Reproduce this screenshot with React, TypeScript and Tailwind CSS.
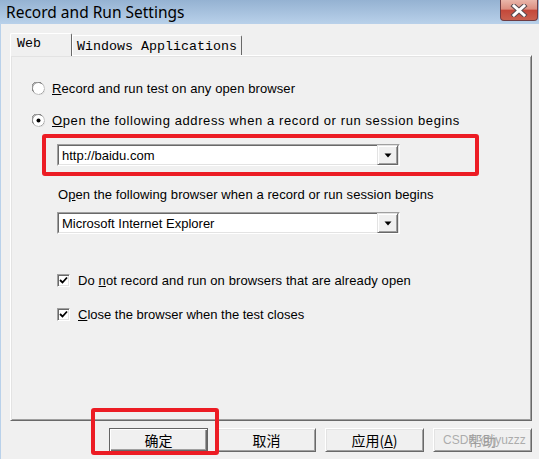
import React from "react";

const sans = { fontFamily: '"Liberation Sans", Arial, sans-serif' };
const mono = { fontFamily: '"Liberation Mono", "DejaVu Sans Mono", monospace' };
const cjk = { fontFamily: '"Noto Sans CJK SC", "Liberation Sans", sans-serif' };

function Radio({ checked }: { checked?: boolean }) {
  return (
    <svg width="13" height="13" viewBox="0 0 13 13" className="shrink-0">
      <circle cx="6.5" cy="6.5" r="6" fill="#fff" stroke="#a0a0a0" />
      <path d="M1.5 9.5 A5.5 5.5 0 0 1 9.5 1.5" fill="none" stroke="#696969" strokeWidth="1" />
      <path d="M11.5 3.5 A5.5 5.5 0 0 1 3.5 11.5" fill="none" stroke="#e3e3e3" strokeWidth="1" />
      {checked && <circle cx="6.5" cy="6.5" r="2" fill="#000" />}
    </svg>
  );
}

function Check() {
  return (
    <div className="w-[13px] h-[13px] shrink-0 bg-white border-t border-l border-[#a0a0a0] border-r border-b border-r-white border-b-white shadow-[inset_1px_1px_0_#696969,inset_-1px_-1px_0_#e3e3e3] flex items-center justify-center">
      <svg width="9" height="9" viewBox="0 0 9 9">
        <path d="M1 4 L3.5 6.5 L8 1.5" fill="none" stroke="#000" strokeWidth="1.8" />
      </svg>
    </div>
  );
}

function Combo({ value }: { value: string }) {
  return (
    <div className="w-[343px] h-[22px] border-t border-l border-[#a0a0a0] border-r-white border-b-white border-r border-b">
      <div className="w-full h-full bg-white border-t border-l border-[#696969] border-r border-b border-r-[#e3e3e3] border-b-[#e3e3e3] flex items-center justify-between">
        <span className="pl-[3px] text-[13px] text-black leading-none" style={sans}>
          {value}
        </span>
        <div className="w-[21px] h-[20px] bg-[#f0f0f0] border-t border-l border-[#e3e3e3] border-r border-b border-r-[#696969] border-b-[#696969] shadow-[inset_1px_1px_0_#fff,inset_-1px_-1px_0_#a0a0a0] flex items-center justify-center">
          <svg width="8" height="5" viewBox="0 0 8 5">
            <path d="M0.5 0.5 L7.5 0.5 L4 4.5 Z" fill="#000" />
          </svg>
        </div>
      </div>
    </div>
  );
}

function Btn({ children, def, disabled }: { children: React.ReactNode; def?: boolean; disabled?: boolean }) {
  return (
    <div
      className={
        "w-[99px] h-[24px] flex items-center justify-center text-[14px] leading-none " +
        (def
          ? "border border-[#646464] shadow-[inset_1px_1px_0_#fff,inset_-1px_-1px_0_#696969,inset_-2px_-2px_0_#a0a0a0] "
          : "border-t border-l border-[#fff] border-r border-b border-r-[#696969] border-b-[#696969] shadow-[inset_1px_1px_0_#e3e3e3,inset_-1px_-1px_0_#a0a0a0] ") +
        (disabled ? "text-[#a0a0a0]" : "text-black")
      }
      style={cjk}
    >
      {children}
    </div>
  );
}

export default function App() {
  return (
    <div className="w-[539px] h-[459px] bg-[#f0f0f0] flex flex-col relative overflow-hidden">
      {/* title bar */}
      <div className="h-[24px] shrink-0 bg-linear-to-b from-[#95b2d2] to-[#b9d1ea] flex items-start justify-between">
        <span className="pl-[6px] pt-[2px] text-[15.5px] text-black leading-[20px]" style={{ fontFamily: '"Noto Sans", "Open Sans", sans-serif' }}>
          Record and Run Settings
        </span>
        <div className="w-[38px] h-[21px] mr-[1px] rounded-b-[4px] border border-t-0 border-[#6e3c43] bg-[linear-gradient(#e9b6aa,#dc8e80_45%,#c4483a_52%,#c9604f)] flex items-center justify-center">
          <svg width="18" height="13" viewBox="0 0 18 13">
            <path d="M4 2 L14 11 M14 2 L4 11" stroke="#5a4a4e" strokeWidth="5" strokeLinecap="square" />
            <path d="M4 2 L14 11 M14 2 L4 11" stroke="#fff" strokeWidth="3" strokeLinecap="square" />
          </svg>
        </div>
      </div>

      {/* body */}
      <div className="flex-1 border-l border-[#b9d1ea] pl-[9px] pt-[9px] flex flex-col">
        {/* tabs */}
        <div className="h-[22px] flex items-end">
          <div
            className="w-[62px] h-[23px] -mb-[1px] relative z-10 bg-[#f0f0f0] border-t border-l border-white border-r border-r-[#696969] rounded-tl-[2px] rounded-tr-[2px] flex items-start pt-[2px] pl-[6px] text-[13.33px] text-black leading-[16px]"
            style={mono}
          >
            Web
          </div>
          <div
            className="w-[170px] h-[20px] bg-[#f0f0f0] border-t border-l border-white border-r border-r-[#696969] rounded-tr-[2px] flex items-start pt-[3px] pl-[4px] text-[13.33px] text-black leading-[16px]"
            style={mono}
          >
            Windows Applications
          </div>
        </div>

        {/* panel */}
        <div className="w-[522px] h-[366px] shrink-0 border-t border-l border-white border-r border-b border-r-[#696969] border-b-[#696969] shadow-[inset_1px_1px_0_#e3e3e3,inset_-1px_-1px_0_#a0a0a0] flex flex-col text-[13px] text-black" style={sans}>
          <div className="h-[16px] mt-[24px] flex items-center pl-[21px] gap-[7px]">
            <Radio />
            <span className="leading-none tracking-[0.1px]">
              <u>R</u>ecord and run test on any open browser
            </span>
          </div>
          <div className="h-[16px] mt-[16px] flex items-center pl-[21px] gap-[7px]">
            <Radio checked />
            <span className="leading-none tracking-[0.6px]">
              <u>O</u>pen the following address when a record or run session begins
            </span>
          </div>
          <div className="mt-[16px] pl-[46px]">
            <Combo value="http://baidu.com" />
          </div>
          <div className="h-[16px] mt-[20px] flex items-center pl-[47px]">
            <span className="leading-none tracking-[0.08px]">
              O<u>p</u>en the following browser when a record or run session begins
            </span>
          </div>
          <div className="mt-[10px] pl-[46px]">
            <Combo value="Microsoft Internet Explorer" />
          </div>
          <div className="h-[16px] mt-[38px] flex items-center pl-[46px] gap-[8px]">
            <Check />
            <span className="leading-none tracking-[0.1px]">
              Do <u>n</u>ot record and run on browsers that are already open
            </span>
          </div>
          <div className="h-[16px] mt-[18px] flex items-center pl-[46px] gap-[8px]">
            <Check />
            <span className="leading-none">
              <u>C</u>lose the browser when the test closes
            </span>
          </div>
        </div>

        {/* buttons */}
        <div className="mt-[7px] pl-[99px] flex gap-[9px]">
          <Btn def>确定</Btn>
          <Btn>取消</Btn>
          <Btn>
            应用(<u>A</u>)
          </Btn>
          <Btn disabled>帮助</Btn>
        </div>
      </div>

      {/* annotations */}
      <div className="absolute left-[42px] top-[134px] w-[437px] h-[42px] border-[4px] border-[#ec1c24] rounded-[3px] pointer-events-none" />
      <div className="absolute left-[91px] top-[408px] w-[128px] h-[47px] border-[4px] border-[#ec1c24] rounded-[3px] pointer-events-none" />
      <div className="absolute left-[443px] top-[432px] whitespace-nowrap text-[12px] leading-[16px] text-[#9a9a9a]/80 pointer-events-none" style={sans}>
        CSDN @jyuzzz
      </div>
    </div>
  );
}
